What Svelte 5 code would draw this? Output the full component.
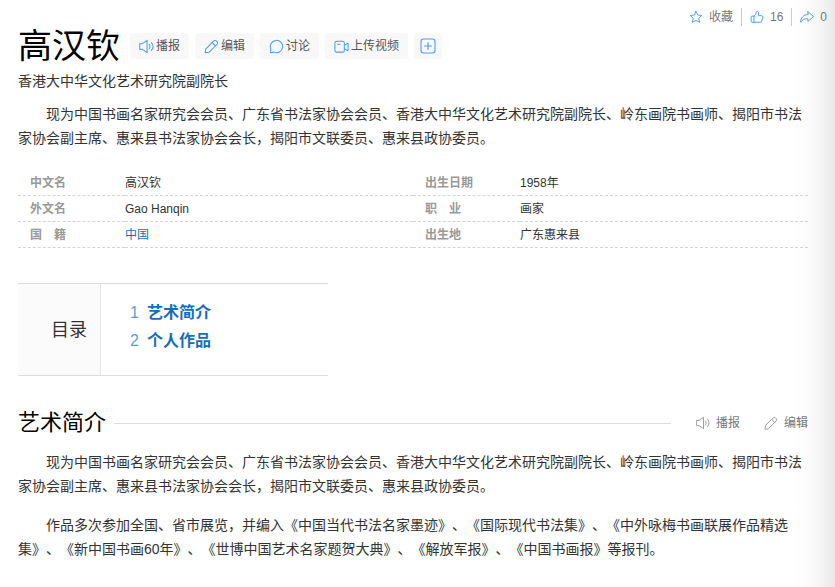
<script>
  const tools = [
    { icon: "sound", text: "播报" },
    { icon: "pen", text: "编辑" },
    { icon: "chat", text: "讨论" },
    { icon: "video", text: "上传视频" },
  ];

  const info = [
    ["中文名", "高汉钦", "出生日期", "1958年"],
    ["外文名", "Gao Hanqin", "职\u3000业", "画家"],
    ["国\u3000籍", "中国", "出生地", "广东惠来县"],
  ];

  const catalog = ["艺术简介", "个人作品"];

  const intro =
    "现为中国书画名家研究会会员、广东省书法家协会会员、香港大中华文化艺术研究院副院长、岭东画院书画师、揭阳市书法家协会副主席、惠来县书法家协会会长，揭阳市文联委员、惠来县政协委员。";
  const works =
    "作品多次参加全国、省市展览，并编入《中国当代书法名家墨迹》、《国际现代书法集》、《中外咏梅书画联展作品精选集》、《新中国书画60年》、《世博中国艺术名家题贺大典》、《解放军报》、《中国书画报》等报刊。";
</script>

{#snippet icon(name)}
  <svg class="icon" viewBox="0 0 16 16" aria-hidden="true">
    {#if name === "sound"}
      <path d="M.8 5h2.800L8.600 1.500v13L3.600 11H.8z" />
      <path d="M10.800 5.600c1.100 1.400 1.100 3.400 0 4.800M13.200 3.800c2.200 2.500 2.200 5.900 0 8.400" />
    {:else if name === "pen"}
      <path d="M1.300 14.700l.5-4 8.600-8.600a1.900 1.900 0 0 1 2.700 0l.8.8a1.900 1.900 0 0 1 0 2.700l-8.600 8.600z" />
      <path d="M8.700 3.800l3.500 3.500" />
    {:else if name === "chat"}
      <path d="M1.500 14.700l.5-3.900A6.600 6.600 0 1 1 5.200 14z" />
    {:else if name === "video"}
      <rect x="1" y="2.500" width="10" height="11.500" rx="1.800" />
      <path d="M11.400 6.500l3.600-2v8l-3.600-2M4 5.600h2.400" />
    {:else if name === "plus"}
      <rect x="1" y="1" width="14" height="14" rx="2.500" />
      <path d="M8 4.500v7M4.500 8h7" />
    {:else if name === "star"}
      <path d="M8 1.500l2 4.200 4.600.6-3.400 3.200.9 4.600L8 11.900l-4.100 2.200.9-4.600L1.400 6.300 6 5.700z" />
    {:else if name === "like"}
      <path d="M4.500 7H2.200c-.5 0-.9.4-.9.9v5.200c0 .5.4.9.9.9h9.300c.9 0 1.600-.5 1.900-1.400l1.200-4.200c.3-1-.4-1.900-1.400-1.900H9.800V3.200c0-2-2.500-2.200-2.700-.5C6.900 4.600 6 6.100 4.500 7zM4.500 7v7" />
    {:else}
      <path d="M9 1.800l6.500 5.700L9 13v-3c-3.400-.2-6.200 1-8.400 4C1 8.600 4 5.400 9 5z" />
    {/if}
  </svg>
{/snippet}

<div class="page">
  <div class="top-bar">
    <button>{@render icon("star")}收藏</button>
    <button>{@render icon("like")}16</button>
    <button>{@render icon("share")}0</button>
  </div>

  <main>
    <header>
      <h1>高汉钦</h1>
      <div class="tools">
        {#each tools as tool}
          <button>{@render icon(tool.icon)}{tool.text}</button>
        {/each}
        <button class="add" aria-label="添加">{@render icon("plus")}</button>
      </div>
    </header>
    <div class="desc">香港大中华文化艺术研究院副院长</div>
    <p>{intro}</p>

    <table>
      <tbody>
        {#each info as row}
          <tr>
            <th scope="row">{row[0]}</th>
            <td>
              {#if row[1] === "中国"}
                <a href="#china">{row[1]}</a>
              {:else}
                {row[1]}
              {/if}
            </td>
            <th scope="row">{row[2]}</th>
            <td>{row[3]}</td>
          </tr>
        {/each}
      </tbody>
    </table>

    <nav class="catalog">
      <h2>目录</h2>
      <ol>
        {#each catalog as item, i}
          <li><span>{i + 1}</span><a href="#section-{i + 1}">{item}</a></li>
        {/each}
      </ol>
    </nav>

    <section id="section-1">
      <div class="section-head">
        <h2>艺术简介</h2>
        <div class="line"></div>
        <div class="section-tools">
          <button>{@render icon("sound")}播报</button>
          <button>{@render icon("pen")}编辑</button>
        </div>
      </div>
      <p>{intro}</p>
      <p>{works}</p>
    </section>
  </main>
</div>

<style>
  :global(body) {
    margin: 0;
    background: #fff;
  }

  .page {
    box-sizing: border-box;
    min-height: 100vh;
    padding-bottom: 26px;
    background: linear-gradient(to left, #e8e8e8, #f5f5f5 14px, #fcfcfc 28px, #fff 42px);
    color: #333;
    font: 14px/24px "Liberation Sans", "Noto Sans CJK SC", sans-serif;
    text-spacing-trim: space-all;
  }

  button {
    display: flex;
    align-items: center;
    padding: 0;
    border: none;
    background: none;
    font: inherit;
    font-size: 12px;
    cursor: pointer;
  }

  a {
    color: #136ec2;
    text-decoration: none;
  }

  h1,
  h2,
  p,
  ol {
    margin: 0;
    padding: 0;
    font-weight: normal;
  }

  .icon {
    width: 14px;
    height: 14px;
    flex: none;
    fill: none;
    stroke: #4c9bf0;
    stroke-width: 1.1;
    stroke-linejoin: round;
    stroke-linecap: round;
  }

  .top-bar {
    display: flex;
    justify-content: flex-end;
    align-items: center;
    height: 29px;
    padding: 4px 8px 0 0;
    box-sizing: border-box;
  }

  .top-bar button {
    gap: 6px;
    height: 18px;
    padding-left: 8px;
    line-height: 18px;
    color: #777;
  }

  .top-bar button + button {
    margin-left: 8px;
    border-left: 1px solid #c3ccd6;
  }

  main {
    padding: 0 27px 0 18px;
  }

  header {
    display: flex;
    align-items: center;
    gap: 10px;
  }

  h1 {
    color: #000;
    font-size: 34px;
    line-height: 34px;
  }

  .tools {
    display: flex;
    gap: 6px;
  }

  .tools button {
    gap: 2px;
    height: 26px;
    padding: 0 9px;
    border-radius: 3px;
    background: #f8f8f8;
    color: #555;
  }

  .tools .icon {
    width: 15px;
    height: 15px;
  }

  .tools .add {
    padding: 0 6px;
  }

  .add .icon {
    width: 16px;
    height: 16px;
  }

  .desc {
    margin: 6px 0 9px;
  }

  p {
    text-indent: 2em;
  }

  table {
    width: 100%;
    margin: 20px 0 35px;
    table-layout: fixed;
    border-spacing: 0;
    font-size: 12px;
  }

  th,
  td {
    padding: 2px 0 0;
    border-bottom: 1px dashed #d5d5d5;
    line-height: 23px;
    text-align: left;
  }

  th {
    width: 107px;
    padding-left: 12px;
    box-sizing: border-box;
    color: #999;
  }

  .catalog {
    display: flex;
    width: 310px;
    border-top: 1px solid #ddd;
    border-bottom: 1px solid #ddd;
  }

  .catalog h2 {
    display: flex;
    align-items: center;
    padding: 0 13px 0 33px;
    border-right: 1px solid #e6e6e6;
    background: #fbfbfb;
    font-size: 18px;
  }

  .catalog ol {
    padding: 15px 0 20px 29px;
    list-style: none;
    font-size: 16px;
    line-height: 28px;
  }

  .catalog span {
    margin-right: 8px;
    color: #5f9cd8;
  }

  .catalog a {
    font-weight: bold;
  }

  .section-head {
    display: flex;
    align-items: center;
    margin: 32px 0 12px;
  }

  .section-head h2 {
    color: #000;
    font-size: 22px;
    line-height: 30px;
  }

  .line {
    flex: 1;
    margin: 0 25px 0 8px;
    border-top: 1px solid #ddd;
  }

  .section-tools {
    display: flex;
    gap: 24px;
  }

  .section-tools button {
    gap: 6px;
    color: #777;
  }

  .section-tools .icon {
    stroke: #999;
  }

  section p + p {
    margin-top: 15px;
  }
</style>
